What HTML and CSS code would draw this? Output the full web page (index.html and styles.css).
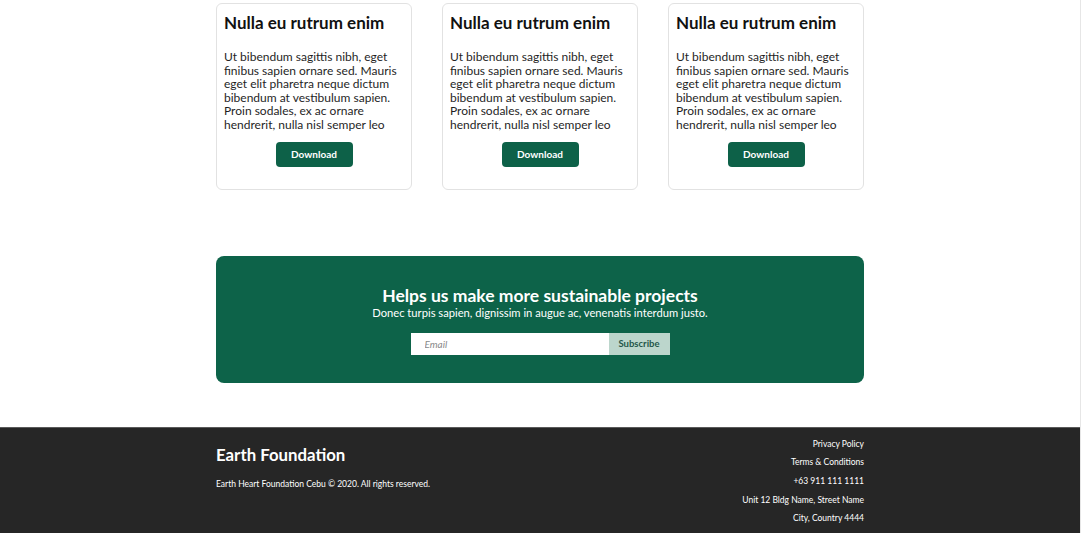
FILE: index.html
```html
<!DOCTYPE html>
<html lang="en">
<head>
<meta charset="utf-8">
<title>Earth Foundation</title>
<link rel="stylesheet" href="styles.css">
</head>
<body>
<div class="page">
  <section class="cards container">
    <div class="card">
      <h3 class="card-title">Nulla eu rutrum enim</h3>
      <p class="card-text">Ut bibendum sagittis nibh, eget finibus sapien ornare sed. Mauris eget elit pharetra neque dictum bibendum at vestibulum sapien. Proin sodales, ex ac ornare hendrerit, nulla nisl semper leo</p>
      <button class="btn-download">Download</button>
    </div>
    <div class="card">
      <h3 class="card-title">Nulla eu rutrum enim</h3>
      <p class="card-text">Ut bibendum sagittis nibh, eget finibus sapien ornare sed. Mauris eget elit pharetra neque dictum bibendum at vestibulum sapien. Proin sodales, ex ac ornare hendrerit, nulla nisl semper leo</p>
      <button class="btn-download">Download</button>
    </div>
    <div class="card">
      <h3 class="card-title">Nulla eu rutrum enim</h3>
      <p class="card-text">Ut bibendum sagittis nibh, eget finibus sapien ornare sed. Mauris eget elit pharetra neque dictum bibendum at vestibulum sapien. Proin sodales, ex ac ornare hendrerit, nulla nisl semper leo</p>
      <button class="btn-download">Download</button>
    </div>
  </section>

  <section class="cta container">
    <h2 class="cta-title">Helps us make more sustainable projects</h2>
    <p class="cta-sub">Donec turpis sapien, dignissim in augue ac, venenatis interdum justo.</p>
    <form class="subscribe">
      <input class="email" type="text" placeholder="Email">
      <button class="btn-subscribe" type="button">Subscribe</button>
    </form>
  </section>

  <footer class="footer">
    <div class="footer-inner container">
      <div class="footer-left">
        <div class="brand">Earth Foundation</div>
        <div class="copyright">Earth Heart Foundation Cebu © 2020. All rights reserved.</div>
      </div>
      <ul class="footer-links">
        <li>Privacy Policy</li>
        <li>Terms &amp; Conditions</li>
        <li>+63 911 111 1111</li>
        <li>Unit 12 Bldg Name, Street Name</li>
        <li>City, Country 4444</li>
      </ul>
    </div>
  </footer>
</div>
</body>
</html>
```

FILE: styles.css
```css
* { box-sizing: border-box; }
html, body { margin: 0; padding: 0; }
body {
  font-family: Lato, "Open Sans", sans-serif;
  color: #1a1a1a;
  background: #fff;
  overflow: hidden;
}
.page {
  width: 1081px;
  border-right: 1px solid #e6e6e6;
  padding-top: 3px;
}
.container {
  width: 648px;
  margin: 0 auto;
}
.cards {
  display: grid;
  grid-template-columns: repeat(3, 196px);
  column-gap: 30px;
}
.card {
  border: 1px solid #e2e2e2;
  border-radius: 6px;
  padding: 8px 7px 22px;
  display: flex;
  flex-direction: column;
  align-items: center;
}
.card-title {
  align-self: stretch;
  margin: 0 0 16px;
  font-size: 17px;
  line-height: 22px;
  font-weight: 700;
  color: #111;
}
.card-text {
  margin: 0 0 10px;
  font-size: 12px;
  line-height: 13.6px;
  color: #1f1f1f;
}
.btn-download {
  width: 77px;
  height: 25px;
  border: none;
  border-radius: 4px;
  background: #0d6148;
  color: #fff;
  font-family: Lato, sans-serif;
  font-weight: 700;
  font-size: 10px;
  padding: 0;
}
.cta {
  margin-top: 66px;
  height: 127px;
  background: #0d6349;
  border-radius: 8px;
  display: flex;
  flex-direction: column;
  align-items: center;
  padding-top: 30px;
  color: #fff;
}
.cta-title {
  margin: 0;
  font-size: 17.5px;
  line-height: 20px;
  font-weight: 700;
}
.cta-sub {
  margin: 0;
  font-size: 11.2px;
  line-height: 13px;
}
.subscribe {
  display: flex;
  margin-top: 14px;
}
.email {
  width: 198px;
  height: 22px;
  border: none;
  padding: 0 14px;
  font-family: Lato, sans-serif;
  font-size: 10px;
  font-style: italic;
  outline: none;
}
.email::placeholder { color: #8a8a8a; }
.btn-subscribe {
  width: 61px;
  height: 22px;
  border: none;
  background: #bcd6cc;
  color: #24574a;
  font-family: Lato, sans-serif;
  font-weight: 700;
  font-size: 9.5px;
  padding: 0;
}
.footer {
  margin-top: 44px;
  background: #262626;
  border-top: 1px solid #5a5a5a;
  height: 106px;
  color: #fff;
}
.footer-inner {
  display: flex;
  justify-content: space-between;
  align-items: flex-start;
  padding-top: 7px;
}
.footer-left {
  padding-top: 10px;
}
.brand {
  font-size: 16.8px;
  line-height: 20px;
  font-weight: 700;
}
.copyright {
  margin-top: 14px;
  font-size: 8.5px;
  line-height: 10px;
}
.footer-links {
  list-style: none;
  margin: 0;
  padding: 0;
  text-align: right;
  font-size: 8.5px;
  line-height: 18.7px;
}
```
